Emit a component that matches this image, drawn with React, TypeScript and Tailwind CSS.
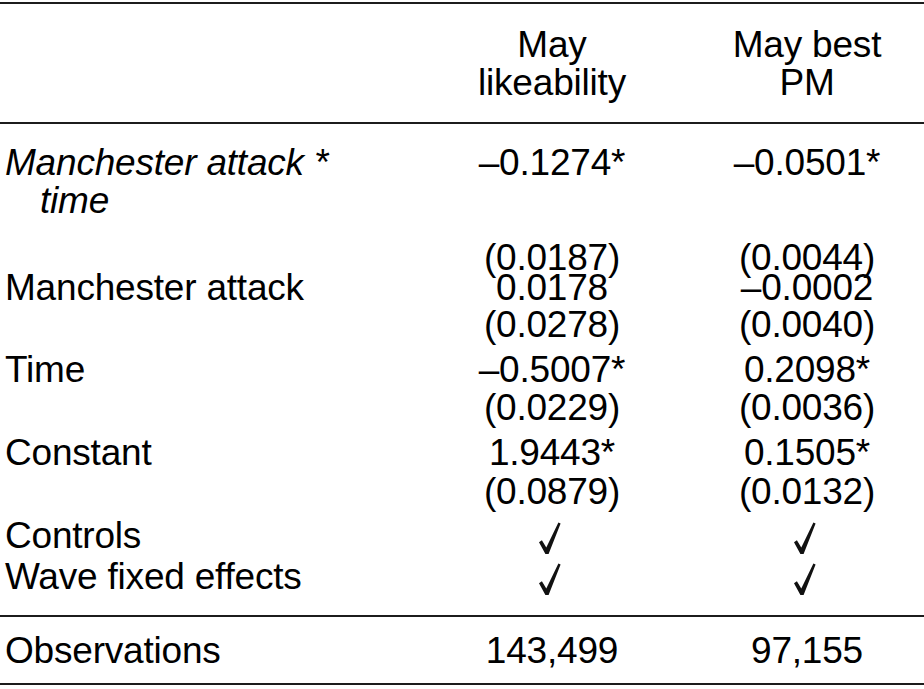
import React from "react";

const font = { fontFamily: '"Liberation Sans", Arial, Helvetica, sans-serif' };

function Row({
  h,
  label,
  a,
  b,
  italic,
}: {
  h: string;
  label: React.ReactNode;
  a?: React.ReactNode;
  b?: React.ReactNode;
  italic?: boolean;
}) {
  return (
    <div className={`grid grid-cols-[414px_276px_234px] leading-[38px] ${h}`}>
      <div className={`pl-[5px] whitespace-nowrap ${italic ? "italic" : ""}`}>{label}</div>
      <div className="text-center">{a}</div>
      <div className="text-center">{b}</div>
    </div>
  );
}

const Check = () => (
  <svg
    viewBox="0 0 23 33"
    className="inline-block align-top mt-[5px] mr-[6px] w-[23px] h-[33px]"
    aria-label="check"
  >
    <path d="M1 20.2 L3.9 18.3 L8.3 25.4 L20.4 0.6 L22.6 1.6 L10.6 32 L7.4 32 Z" fill="#111" />
  </svg>
);

export default function App() {
  return (
    <div
      className="w-[924px] h-[689px] bg-white text-black text-[37px] tracking-[-0.2px] overflow-hidden"
      style={font}
    >
      <div className="h-[2px]" />
      <div className="h-[2px] bg-[#1c1c1c]" />
      {/* header */}
      <div className="grid grid-cols-[414px_276px_234px] leading-[38px] pt-[22px] h-[118px]">
        <div />
        <div className="text-center">
          May
          <br />
          likeability
        </div>
        <div className="text-center">
          May best
          <br />
          PM
        </div>
      </div>
      <div className="h-[2px] bg-[#1c1c1c]" />
      <div className="h-[20px]" />
      <Row
        h="h-[95px]"
        italic
        label={
          <>
            Manchester attack *
            <br />
            <span className="pl-[35px]">time</span>
          </>
        }
        a="–0.1274*"
        b="–0.0501*"
      />
      <Row h="h-[30px]" label="" a="(0.0187)" b="(0.0044)" />
      <Row h="h-[37px]" label="Manchester attack" a="0.0178" b="–0.0002" />
      <Row h="h-[45px]" label="" a="(0.0278)" b="(0.0040)" />
      <Row h="h-[38px]" label="Time" a="–0.5007*" b="0.2098*" />
      <Row h="h-[45px]" label="" a="(0.0229)" b="(0.0036)" />
      <Row h="h-[39px]" label="Constant" a="1.9443*" b="0.1505*" />
      <Row h="h-[44px]" label="" a="(0.0879)" b="(0.0132)" />
      <Row h="h-[41px]" label="Controls" a={<Check />} b={<Check />} />
      <Row h="h-[57px]" label="Wave fixed effects" a={<Check />} b={<Check />} />
      <div className="h-[2px] bg-[#1c1c1c]" />
      <div className="h-[15px]" />
      <Row h="h-[51px]" label="Observations" a="143,499" b="97,155" />
      <div className="h-[2px] bg-[#1c1c1c]" />
    </div>
  );
}
